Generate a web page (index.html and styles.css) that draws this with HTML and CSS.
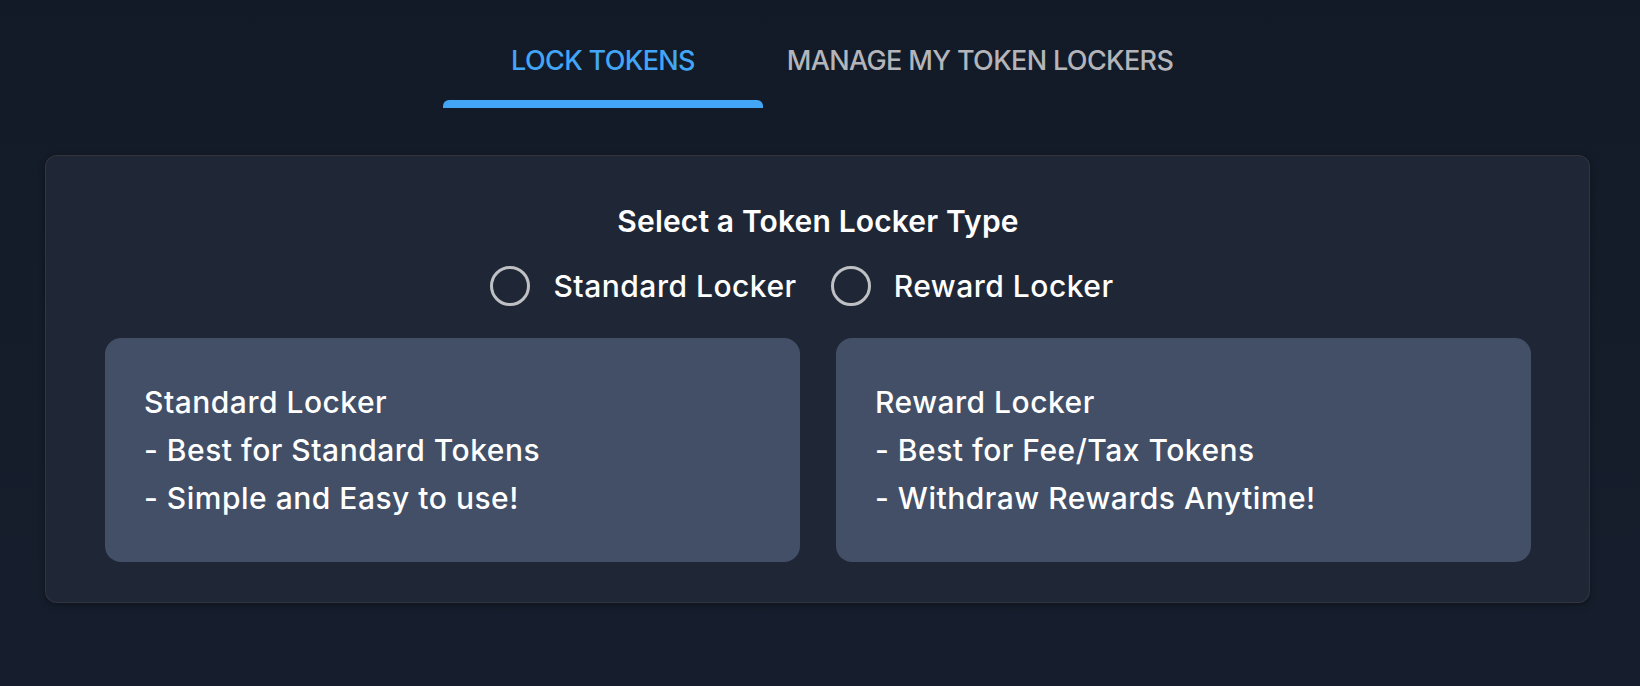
FILE: index.html
```html
<!DOCTYPE html>
<html lang="en">
<head>
<meta charset="utf-8">
<title>Token Locker</title>
<link rel="stylesheet" href="styles.css">
</head>
<body>
  <nav class="tabs">
    <div class="tab tab-active">
      <span class="tab-label">LOCK TOKENS</span>
      <span class="tab-indicator"></span>
    </div>
    <div class="tab tab-wide">
      <span class="tab-label">MANAGE MY TOKEN LOCKERS</span>
      <span class="tab-indicator tab-indicator-off"></span>
    </div>
  </nav>

  <section class="panel">
    <h2 class="panel-title">Select a Token Locker Type</h2>
    <div class="radio-row">
      <label class="radio-option">
        <span class="radio-circle"></span>
        <span class="radio-label">Standard Locker</span>
      </label>
      <label class="radio-option">
        <span class="radio-circle"></span>
        <span class="radio-label">Reward Locker</span>
      </label>
    </div>
    <div class="cards">
      <div class="card">
        <p class="card-line">Standard Locker</p>
        <p class="card-line">- Best for Standard Tokens</p>
        <p class="card-line">- Simple and Easy to use!</p>
      </div>
      <div class="card">
        <p class="card-line">Reward Locker</p>
        <p class="card-line">- Best for Fee/Tax Tokens</p>
        <p class="card-line">- Withdraw Rewards Anytime!</p>
      </div>
    </div>
  </section>
</body>
</html>
```

FILE: styles.css
```css
* {
  box-sizing: border-box;
}

html, body {
  margin: 0;
  padding: 0;
}

body {
  width: 1640px;
  height: 686px;
  overflow: hidden;
  background: linear-gradient(180deg, #131a27 0%, #151d2b 60%, #161e2d 100%);
  font-family: "Inter", "Noto Sans", sans-serif;
  color: #ffffff;
}

.tabs {
  display: flex;
  justify-content: center;
}

.tab {
  width: 320px;
  display: flex;
  flex-direction: column;
  align-items: center;
  padding-top: 40px;
}

.tab-wide {
  width: 434px;
}

.tab-label {
  font-size: 27px;
  line-height: 42px;
  font-weight: 500;
  letter-spacing: -0.65px;
  color: #b3b5ba;
}

.tab-active .tab-label {
  color: #42a5f5;
}

.tab-indicator {
  align-self: stretch;
  height: 8px;
  margin-top: 18px;
  background: #42a5f5;
  border-radius: 6px 6px 0 0;
}

.tab-indicator-off {
  background: transparent;
}

.panel {
  margin: 47px 50px 0 45px;
  padding: 45px 58px 40px 59px;
  background: #1f2736;
  border-radius: 12px;
  border: 1px solid rgba(120, 105, 80, 0.22);
  box-shadow: 0 2px 6px rgba(0, 0, 0, 0.35);
}

.panel-title {
  margin: 0;
  text-align: center;
  font-size: 30px;
  line-height: 40px;
  font-weight: 600;
  letter-spacing: 0.15px;
}

.radio-row {
  display: flex;
  justify-content: center;
  gap: 34px;
  margin-top: 24px;
  padding-right: 32px;
}

.radio-option {
  display: flex;
  align-items: center;
  gap: 23px;
  height: 42px;
}

.radio-circle {
  width: 40px;
  height: 40px;
  border-radius: 50%;
  border: 3px solid #bfc0c4;
}

.radio-label {
  font-size: 30px;
  font-weight: 500;
  letter-spacing: 0.5px;
}

.cards {
  display: grid;
  grid-template-columns: 1fr 1fr;
  gap: 36px;
  margin-top: 31px;
}

.card {
  background: #424f66;
  border-radius: 16px;
  padding: 40px 40px 40px 39px;
}

.card-line {
  margin: 0;
  font-size: 30px;
  line-height: 48px;
  font-weight: 500;
  letter-spacing: 0.5px;
}
```
